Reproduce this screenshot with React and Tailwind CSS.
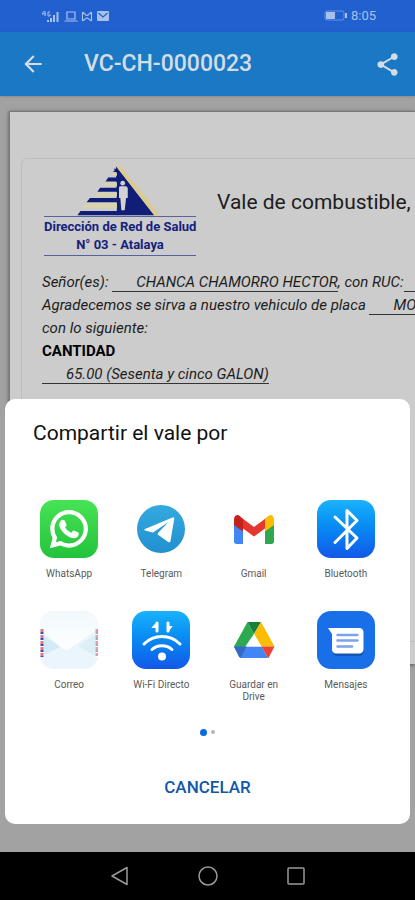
import React from 'react';
import { FaWhatsapp } from 'react-icons/fa';
import { MdArrowBack, MdShare } from 'react-icons/md';

const WhatsAppIcon = () => (
  <div className="w-[58px] h-[58px] rounded-[14px] bg-gradient-to-b from-[#46e355] to-[#21c33c] flex items-center justify-center text-white">
    <FaWhatsapp size={42} strokeWidth={14} />
  </div>
);

const TelegramIcon = () => (
  <svg className="w-[58px] h-[58px]" viewBox="0 0 58 58">
    <defs>
      <linearGradient id="tg" x1="0" y1="0" x2="0" y2="1">
        <stop offset="0" stopColor="#35a9e0" />
        <stop offset="1" stopColor="#2190cf" />
      </linearGradient>
    </defs>
    <circle cx="29" cy="29" r="24" fill="url(#tg)" />
    <path d="M13 29L40.500 17.500c1.300-.5 2 .3 1.700 1.600L38.500 41c-.3 1.400-1.200 1.700-2.300.9L25 34l-2.600-1-9.300-2.500c-1.200-.4-1.200-1-.1-1.500z" fill="#fff" />
    <path d="M21 32.500L36.500 22 26 33l-1 3z" fill="#2a9bd7" />
  </svg>
);

const GmailIcon = () => (
  <svg className="w-[58px] h-[58px]" viewBox="0 0 58 58">
    <path d="M9 21v20.500c0 1.500 1 2.500 2.500 2.500H18V25z" fill="#4285f4" />
    <path d="M40 25v19h6.500c1.500 0 2.500-1 2.500-2.500V21z" fill="#31a650" />
    <path d="M16.500 17.800L29 27l12.500-9.200L40 28.500 29 36.500 18 28.500z" fill="#e5372b" />
    <path d="M9 19.500V25l9 6.500V19l-1.500-1.200C13 12.500 9 15.500 9 19.500z" fill="#c5221f" />
    <path d="M40 19v12.500l9-6.500v-5.500c0-4-4-7-7.500-1.700z" fill="#fbbc04" />
  </svg>
);

const BluetoothIcon = () => (
  <div className="w-[58px] h-[58px] rounded-[14px] bg-gradient-to-b from-[#1bb2fb] to-[#1557e8]">
    <svg viewBox="0 0 58 58" fill="none" stroke="#fff" strokeWidth="3" strokeLinecap="round" strokeLinejoin="round">
      <path d="M18 17l22 21-10 10.500V10.500L40 20.500 18 42.500" />
    </svg>
  </div>
);

const MailIcon = () => (
  <svg className="w-[58px] h-[58px]" viewBox="0 0 58 58">
    <defs>
      <clipPath id="mail-clip"><rect width="58" height="58" rx="14" /></clipPath>
      <linearGradient id="mail-flap" x1="0" y1="0" x2="0" y2="1">
        <stop offset="0" stopColor="#f1f9fc" />
        <stop offset="1" stopColor="#fdffff" />
      </linearGradient>
    </defs>
    <g clipPath="url(#mail-clip)">
      <rect width="58" height="58" fill="#eaf6fb" />
      <path d="M2 23l18 13L2 45z" fill="#d3ebf4" />
      <path d="M56 23L38 35l18 10z" fill="#dceff6" />
      <path d="M0 0h58v18L29 38c-2 1.200-4 1-6-.5L3 21 0 18z" fill="url(#mail-flap)" />
    </g>
    <path d="M2 18v28" stroke="#fff" strokeWidth="3" />
    <path d="M2 18v28" stroke="#e5738a" strokeWidth="3" strokeDasharray="3 3" />
    <path d="M2 21v25" stroke="#3d4fb0" strokeWidth="3" strokeDasharray="2 4" />
    <path d="M57 18v28" stroke="#fff" strokeWidth="3" />
    <path d="M57 18v28" stroke="#eb9aa5" strokeWidth="3" strokeDasharray="3 3" />
    <path d="M57 21v23" stroke="#86b4c8" strokeWidth="3" strokeDasharray="2 4" />
  </svg>
);

const WifiDirectIcon = () => (
  <div className="w-[58px] h-[58px] rounded-[14px] bg-gradient-to-b from-[#1bb2fb] to-[#1557e8]">
    <svg viewBox="0 0 58 58" fill="none" stroke="#fff" strokeWidth="3" strokeLinecap="round" strokeLinejoin="round">
      <path d="M12 33c10-10 26-10 36 0" />
      <path d="M20 38.500c5.500-5 14.500-5 20 0" />
      <circle cx="30" cy="45.500" r="4" fill="#fff" stroke="none" />
      <path d="M25 20v-8M36 12v8" />
      <path d="M25 11.500l-5 5h5zM36 20.500l4-5h-4z" fill="#fff" strokeWidth="1" />
    </svg>
  </div>
);

const DriveIcon = () => (
  <svg className="w-[58px] h-[58px]" viewBox="0 0 58 58">
    <path d="M22.500 11L9 35.500l5 9L29 23z" fill="#2da94f" />
    <path d="M22.500 11h13.500L29 23z" fill="#188038" />
    <path d="M36 11L49.500 35.500H36.500L29 23z" fill="#fbbc04" />
    <path d="M9 35.500h27.500l6.500 11.500H15.500z" fill="#4285f4" />
    <path d="M9 35.500h12.500L15.500 47c-.7-.2-1.200-.7-1.500-1.200z" fill="#356ac3" />
    <path d="M36.500 35.500h13L44 46c-.3.600-.7.900-1 1z" fill="#ea4335" />
    <path d="M29 23l7.500 12.500h-15z" fill="#fff" />
  </svg>
);

const MessagesIcon = () => (
  <div className="w-[58px] h-[58px] rounded-[14px] bg-[#196fe8]">
    <svg viewBox="0 0 58 58">
      <path d="M16 42h28l3-4c.5 4-1.500 7-5 7H20c-2 0-3.500-1-4-3z" fill="#1254b8" />
      <path d="M11 17h31.500c2.200 0 4 1.800 4 4v17.500c0 2.200-1.800 4-4 4H19c-2.200 0-4-1.800-4-4V23z" fill="#fff" />
      <path d="M20.500 24h20M20.500 29.500h20M20.500 35.500h14.500" stroke="#7ba2ec" strokeWidth="2.500" strokeLinecap="round" />
    </svg>
  </div>
);

const apps = [
  { name: 'WhatsApp', Icon: WhatsAppIcon },
  { name: 'Telegram', Icon: TelegramIcon },
  { name: 'Gmail', Icon: GmailIcon },
  { name: 'Bluetooth', Icon: BluetoothIcon },
  { name: 'Correo', Icon: MailIcon },
  { name: 'Wi-Fi Directo', Icon: WifiDirectIcon },
  { name: 'Guardar en Drive', Icon: DriveIcon },
  { name: 'Mensajes', Icon: MessagesIcon },
];

const StatusBar = () => (
  <div className="h-8 bg-[#2160cf] text-[#a9c0ec] flex items-center justify-between pl-10 pr-[39px]">
    <svg width="72" height="14" viewBox="0 0 72 14" fill="none" stroke="currentColor">
      <path d="M4 2L2 5h4M5 2v5M10 3H8v4h2V5" strokeWidth="1" />
      <path d="M8 13v-2M11 13V9M14 13V6M17.500 13V3" strokeWidth="2" />
      <path d="M27 3h8v7h-8zM24.500 12h13" strokeWidth="1.200" />
      <path d="M42.500 3l4 3.500h1l4-3.500M42.500 12V3M51.500 12V3M42.500 12l4-3h1l4 3" strokeWidth="1.200" />
      <rect x="57" y="2" width="12" height="10" rx="1" fill="currentColor" stroke="none" />
      <path d="M58.500 4l4.500 4 4.500-4" stroke="#2160cf" strokeWidth="1.200" />
    </svg>
    <div className="flex items-center gap-1">
      <svg width="23" height="12" viewBox="0 0 23 12">
        <rect x="1" y="1" width="19" height="9" rx="2" fill="none" stroke="currentColor" strokeOpacity="0.5" />
        <rect x="2" y="2" width="9" height="7" fill="currentColor" />
        <rect x="21" y="3" width="2" height="5" fill="currentColor" />
      </svg>
      <span className="text-[13px] leading-4">8:05</span>
    </div>
  </div>
);

const AppBar = () => (
  <header className="h-16 bg-[#1a78c4] text-[#d3dde6] flex items-center pl-5 pr-[14px] relative shadow-sm">
    <button type="button" aria-label="Atrás">
      <MdArrowBack size={26} />
    </button>
    <h1 className="flex-1 ml-[38px] text-[23px] leading-7 font-medium">VC-CH-0000023</h1>
    <button type="button" aria-label="Compartir">
      <MdShare size={27} />
    </button>
  </header>
);

const OrgLogo = () => (
  <div className="w-[152px] shrink-0 text-[#15217c] text-center font-bold text-[13px]">
    <svg className="block w-full" viewBox="132 195 450 150">
      <path d="M345 199L458 344H348z" fill="#101e78" />
      <path d="M345 198h14l116 146h-16z" fill="#dccb8c" />
      <path d="M338 217h10v10h-19zM316 246h32v12h-42zM293 276h55v12h-66zM262 307h86v17h-104z" fill="#d8d3ae" />
      <path d="M338 206h10v10h-12l6-6zM322 232h26v12h-34zM298 262h50v12h-58zM268 293h80v12h-90zM240 331h110v13H231z" fill="#101e78" />
      <circle cx="365" cy="249" r="7" fill="#d2d2d2" />
      <path d="M356 258h20l4 5v30h-5l-4 36h-10l-3-36h-4v-31z" fill="#d2d2d2" />
    </svg>
    <div className="border-y border-[#5563a5] pt-px pb-px">
      <p className="leading-[18px] whitespace-nowrap">Dirección de Red de Salud</p>
      <p className="leading-[18px]">N° 03 - Atalaya</p>
    </div>
  </div>
);

const Blank = ({ children }) => (
  <span className="border-b border-[#333] pl-6">{children}</span>
);

const Voucher = () => (
  <div className="ml-[9px] mt-[15px] bg-[#cccccc] border-t border-l border-[#777] shadow-[0_1px_4px_rgba(0,0,0,0.5)] pt-[46px] pl-[11px] pb-[22px]">
    <article className="min-h-[484px] border border-r-0 border-[#bdbdbd] rounded-l-md pl-[22px] pt-[6px] whitespace-nowrap overflow-hidden text-[#1d1d1d]">
      <div className="flex items-center">
        <OrgLogo />
        <h2 className="ml-[21px] pb-4 text-[21px] leading-7">Vale de combustible,</h2>
      </div>
      <div className="-ml-[2px] mt-[15px] text-[15px] leading-[23px] italic">
        <p>Señor(es): <Blank>CHANCA CHAMORRO HECTOR</Blank>, con RUC: <Blank /></p>
        <p>Agradecemos se sirva a nuestro vehiculo de placa <Blank>MO</Blank></p>
        <p>con lo siguiente:</p>
        <p className="not-italic font-bold text-black">CANTIDAD</p>
        <p><Blank>65.00 (Sesenta y cinco GALON)</Blank></p>
      </div>
    </article>
  </div>
);

const ShareSheet = () => (
  <section
    role="dialog"
    aria-labelledby="share-title"
    className="absolute inset-x-[5px] bottom-7 bg-white rounded-[10px] pt-5 pb-[18px] flex flex-col items-center"
  >
    <h2 id="share-title" className="self-start ml-7 text-[21px] leading-7 text-[#111]">Compartir el vale por</h2>

    <div className="w-full mt-[53px] px-[18px] grid grid-cols-4 gap-y-[31px] items-start">
      {apps.map(({ name, Icon }) => (
        <button key={name} type="button" className="flex flex-col items-center gap-[10px]">
          <Icon />
          <span className="max-w-[64px] text-[10px] leading-3 text-[#5a5a5a] text-center">{name}</span>
        </button>
      ))}
    </div>

    {/* Page dots */}
    <div className="mt-[25px] h-2 flex items-center gap-1">
      <span className="w-[7px] h-[7px] rounded-full bg-[#0a6be0]" />
      <span className="w-1 h-1 rounded-full bg-[#b5b5b5]" />
    </div>

    <button type="button" className="mt-[34px] h-9 px-4 text-[17px] font-medium text-[#1158a8]">CANCELAR</button>
  </section>
);

const NavBar = () => (
  <nav className="h-12 bg-black text-[#9a9a9a] flex items-center justify-center gap-[68px]">
    <button type="button" aria-label="Atrás">
      <svg width="20" height="20" viewBox="0 0 20 20" fill="none" stroke="currentColor" strokeWidth="1.500" strokeLinejoin="round">
        <path d="M17 1.500v17L2 10z" />
      </svg>
    </button>
    <button type="button" aria-label="Inicio">
      <svg width="20" height="20" viewBox="0 0 20 20" fill="none" stroke="currentColor" strokeWidth="1.500">
        <circle cx="10" cy="10" r="9" />
      </svg>
    </button>
    <button type="button" aria-label="Recientes">
      <svg width="20" height="20" viewBox="0 0 20 20" fill="none" stroke="currentColor" strokeWidth="1.500">
        <rect x="2" y="2" width="16" height="16" rx="1" />
      </svg>
    </button>
  </nav>
);

export default function App() {
  return (
    <div className="min-h-screen flex flex-col bg-[#a2a2a2] font-[Roboto,sans-serif] overflow-hidden">
      <StatusBar />
      <AppBar />
      <main className="flex-1 relative">
        <Voucher />
        <ShareSheet />
      </main>
      <NavBar />
    </div>
  );
}
